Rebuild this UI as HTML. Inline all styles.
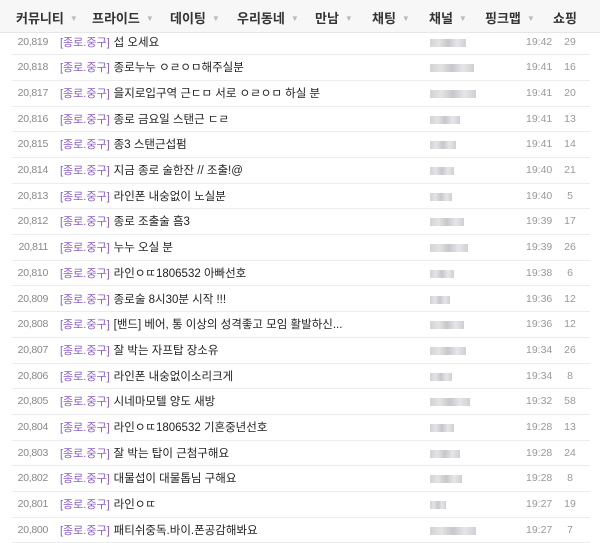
<!DOCTYPE html>
<html><head><meta charset="utf-8"><style>
*{margin:0;padding:0;box-sizing:border-box}
body{width:600px;height:543px;overflow:hidden;background:#fff;font-family:"Liberation Sans","Noto Sans CJK KR",sans-serif;position:relative}
.hd{position:absolute;left:0;top:0;width:600px;height:33px;background:#f7f7f7;border-bottom:1px solid #e6e6e6}
.hd span{position:absolute;top:8px;font-size:13px;font-weight:bold;color:#333;white-space:nowrap}
.hd span i{font-style:normal;color:#bbb;font-size:8px;margin-left:6px;vertical-align:2px}
.r{position:absolute;left:12px;width:578px;height:25.7px;border-bottom:1px solid #ececec;font-size:11.5px}
.r .n{position:absolute;left:0;width:36px;text-align:right;top:6px;color:#888;font-size:10.5px;letter-spacing:-0.3px}
.r .t{position:absolute;left:48px;top:4px;color:#222;white-space:nowrap}
.r .t b{font-weight:normal;color:#8a5cc0;font-size:11px;margin-right:4px}
.r .u{position:absolute;left:418px;top:9px;height:8px;background:linear-gradient(90deg,#c8c8cc,#ddd,#b8b8c0,#e0e0e4,#c4c4c8);opacity:.8}
.r .tm{position:absolute;left:514px;top:6px;color:#999;font-size:10.5px}
.r .c{position:absolute;left:546px;width:24px;text-align:center;top:6px;color:#999;font-size:10.5px}
</style></head><body>
<div class="hd">
<span style="left:16px">커뮤니티<i>▼</i></span>
<span style="left:92px">프라이드<i>▼</i></span>
<span style="left:170px">데이팅<i>▼</i></span>
<span style="left:237px">우리동네<i>▼</i></span>
<span style="left:315px">만남<i>▼</i></span>
<span style="left:372px">채팅<i>▼</i></span>
<span style="left:429px">채널<i>▼</i></span>
<span style="left:485px">핑크맵<i>▼</i></span>
<span style="left:553px">쇼핑</span>
</div>
<div class="r" style="top:29.5px"><span class="n">20,819</span><span class="t"><b>[종로.중구]</b>섭 오세요</span><span class="u" style="width:36px"></span><span class="tm">19:42</span><span class="c">29</span></div>
<div class="r" style="top:55.2px"><span class="n">20,818</span><span class="t"><b>[종로.중구]</b>종로누누 ㅇㄹㅇㅁ해주실분</span><span class="u" style="width:44px"></span><span class="tm">19:41</span><span class="c">16</span></div>
<div class="r" style="top:80.9px"><span class="n">20,817</span><span class="t"><b>[종로.중구]</b>을지로입구역 근ㄷㅁ 서로 ㅇㄹㅇㅁ 하실 분</span><span class="u" style="width:46px"></span><span class="tm">19:41</span><span class="c">20</span></div>
<div class="r" style="top:106.6px"><span class="n">20,816</span><span class="t"><b>[종로.중구]</b>종로 금요일 스탠근 ㄷㄹ</span><span class="u" style="width:30px"></span><span class="tm">19:41</span><span class="c">13</span></div>
<div class="r" style="top:132.3px"><span class="n">20,815</span><span class="t"><b>[종로.중구]</b>종3 스탠근섭펌</span><span class="u" style="width:26px"></span><span class="tm">19:41</span><span class="c">14</span></div>
<div class="r" style="top:158px"><span class="n">20,814</span><span class="t"><b>[종로.중구]</b>지금 종로 술한잔 // 조출!@</span><span class="u" style="width:24px"></span><span class="tm">19:40</span><span class="c">21</span></div>
<div class="r" style="top:183.7px"><span class="n">20,813</span><span class="t"><b>[종로.중구]</b>라인폰 내숭없이 노실분</span><span class="u" style="width:22px"></span><span class="tm">19:40</span><span class="c">5</span></div>
<div class="r" style="top:209.4px"><span class="n">20,812</span><span class="t"><b>[종로.중구]</b>종로 조출술 흠3</span><span class="u" style="width:34px"></span><span class="tm">19:39</span><span class="c">17</span></div>
<div class="r" style="top:235.1px"><span class="n">20,811</span><span class="t"><b>[종로.중구]</b>누누 오실 분</span><span class="u" style="width:38px"></span><span class="tm">19:39</span><span class="c">26</span></div>
<div class="r" style="top:260.8px"><span class="n">20,810</span><span class="t"><b>[종로.중구]</b>라인ㅇㄸ1806532 아빠선호</span><span class="u" style="width:24px"></span><span class="tm">19:38</span><span class="c">6</span></div>
<div class="r" style="top:286.5px"><span class="n">20,809</span><span class="t"><b>[종로.중구]</b>종로술 8시30분 시작 !!!</span><span class="u" style="width:20px"></span><span class="tm">19:36</span><span class="c">12</span></div>
<div class="r" style="top:312.2px"><span class="n">20,808</span><span class="t"><b>[종로.중구]</b>[밴드] 베어, 통 이상의 성격좋고 모임 활발하신...</span><span class="u" style="width:34px"></span><span class="tm">19:36</span><span class="c">12</span></div>
<div class="r" style="top:337.9px"><span class="n">20,807</span><span class="t"><b>[종로.중구]</b>잘 박는 자프탑 장소유</span><span class="u" style="width:36px"></span><span class="tm">19:34</span><span class="c">26</span></div>
<div class="r" style="top:363.6px"><span class="n">20,806</span><span class="t"><b>[종로.중구]</b>라인폰 내숭없이소리크게</span><span class="u" style="width:22px"></span><span class="tm">19:34</span><span class="c">8</span></div>
<div class="r" style="top:389.3px"><span class="n">20,805</span><span class="t"><b>[종로.중구]</b>시네마모텔 양도 새방</span><span class="u" style="width:40px"></span><span class="tm">19:32</span><span class="c">58</span></div>
<div class="r" style="top:415px"><span class="n">20,804</span><span class="t"><b>[종로.중구]</b>라인ㅇㄸ1806532 기혼중년선호</span><span class="u" style="width:24px"></span><span class="tm">19:28</span><span class="c">13</span></div>
<div class="r" style="top:440.7px"><span class="n">20,803</span><span class="t"><b>[종로.중구]</b>잘 박는 탑이 근첨구해요</span><span class="u" style="width:30px"></span><span class="tm">19:28</span><span class="c">24</span></div>
<div class="r" style="top:466.4px"><span class="n">20,802</span><span class="t"><b>[종로.중구]</b>대물섭이 대물톱님 구해요</span><span class="u" style="width:32px"></span><span class="tm">19:28</span><span class="c">8</span></div>
<div class="r" style="top:492.1px"><span class="n">20,801</span><span class="t"><b>[종로.중구]</b>라인ㅇㄸ</span><span class="u" style="width:16px"></span><span class="tm">19:27</span><span class="c">19</span></div>
<div class="r" style="top:517.8px"><span class="n">20,800</span><span class="t"><b>[종로.중구]</b>패티쉬중독.바이.폰공감해봐요</span><span class="u" style="width:46px"></span><span class="tm">19:27</span><span class="c">7</span></div>
</body></html>
